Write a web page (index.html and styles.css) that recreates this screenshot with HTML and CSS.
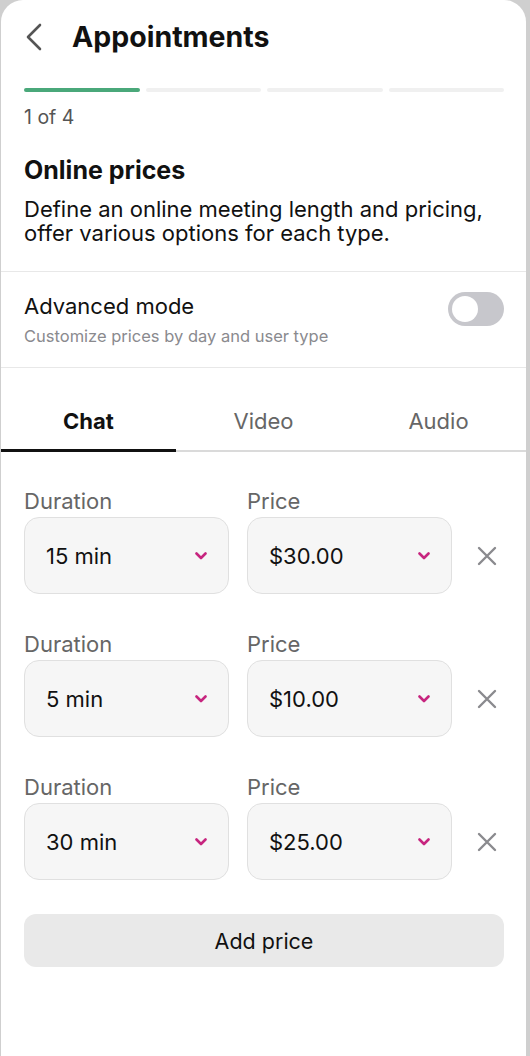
FILE: index.html
```html
<!DOCTYPE html>
<html lang="en">
<head>
<meta charset="utf-8">
<title>Appointments</title>
<link rel="stylesheet" href="styles.css">
</head>
<body>
<div class="card">
  <header class="topbar">
    <svg class="back" width="20" height="28" viewBox="0 0 20 28"><path d="M16 2 L4 14 L16 26" fill="none" stroke="#555" stroke-width="2.6" stroke-linecap="round" stroke-linejoin="round"/></svg>
    <h1 class="title">Appointments</h1>
  </header>

  <div class="progress">
    <span class="seg active"></span>
    <span class="seg"></span>
    <span class="seg"></span>
    <span class="seg"></span>
  </div>
  <div class="step">1 of 4</div>

  <section class="intro">
    <h2 class="intro-title">Online prices</h2>
    <p class="intro-text">Define an online meeting length and pricing, offer various options for each type.</p>
  </section>

  <section class="advanced">
    <div class="adv-text">
      <div class="adv-title">Advanced mode</div>
      <div class="adv-sub">Customize prices by day and user type</div>
    </div>
    <div class="toggle"><span class="knob"></span></div>
  </section>

  <nav class="tabs">
    <div class="tab active">Chat</div>
    <div class="tab">Video</div>
    <div class="tab">Audio</div>
  </nav>

  <div class="rows">
    <div class="row">
      <div class="field">
        <div class="label">Duration</div>
        <div class="select"><span>15 min</span><svg class="chev" width="12" height="8" viewBox="0 0 12 8"><path d="M1.5 1.5 L6 6 L10.5 1.5" fill="none" stroke="#c7257f" stroke-width="2.6" stroke-linecap="round" stroke-linejoin="round"/></svg></div>
      </div>
      <div class="field">
        <div class="label">Price</div>
        <div class="select"><span>$30.00</span><svg class="chev" width="12" height="8" viewBox="0 0 12 8"><path d="M1.5 1.5 L6 6 L10.5 1.5" fill="none" stroke="#c7257f" stroke-width="2.6" stroke-linecap="round" stroke-linejoin="round"/></svg></div>
      </div>
      <div class="remove"><svg width="20" height="20" viewBox="0 0 20 20"><path d="M2 2 L18 18 M18 2 L2 18" fill="none" stroke="#8a8a8e" stroke-width="2.4" stroke-linecap="round"/></svg></div>
    </div>

    <div class="row">
      <div class="field">
        <div class="label">Duration</div>
        <div class="select"><span>5 min</span><svg class="chev" width="12" height="8" viewBox="0 0 12 8"><path d="M1.5 1.5 L6 6 L10.5 1.5" fill="none" stroke="#c7257f" stroke-width="2.6" stroke-linecap="round" stroke-linejoin="round"/></svg></div>
      </div>
      <div class="field">
        <div class="label">Price</div>
        <div class="select"><span>$10.00</span><svg class="chev" width="12" height="8" viewBox="0 0 12 8"><path d="M1.5 1.5 L6 6 L10.5 1.5" fill="none" stroke="#c7257f" stroke-width="2.6" stroke-linecap="round" stroke-linejoin="round"/></svg></div>
      </div>
      <div class="remove"><svg width="20" height="20" viewBox="0 0 20 20"><path d="M2 2 L18 18 M18 2 L2 18" fill="none" stroke="#8a8a8e" stroke-width="2.4" stroke-linecap="round"/></svg></div>
    </div>

    <div class="row">
      <div class="field">
        <div class="label">Duration</div>
        <div class="select"><span>30 min</span><svg class="chev" width="12" height="8" viewBox="0 0 12 8"><path d="M1.5 1.5 L6 6 L10.5 1.5" fill="none" stroke="#c7257f" stroke-width="2.6" stroke-linecap="round" stroke-linejoin="round"/></svg></div>
      </div>
      <div class="field">
        <div class="label">Price</div>
        <div class="select"><span>$25.00</span><svg class="chev" width="12" height="8" viewBox="0 0 12 8"><path d="M1.5 1.5 L6 6 L10.5 1.5" fill="none" stroke="#c7257f" stroke-width="2.6" stroke-linecap="round" stroke-linejoin="round"/></svg></div>
      </div>
      <div class="remove"><svg width="20" height="20" viewBox="0 0 20 20"><path d="M2 2 L18 18 M18 2 L2 18" fill="none" stroke="#8a8a8e" stroke-width="2.4" stroke-linecap="round"/></svg></div>
    </div>
  </div>

  <div class="add-wrap">
    <button class="add-btn">Add price</button>
  </div>
</div>
</body>
</html>
```

FILE: styles.css
```css
* { box-sizing: border-box; }
html, body {
  margin: 0;
  padding: 0;
  background: #cfcfcf;
}
body {
  font-family: Inter, "Noto Sans", "Liberation Sans", sans-serif;
  color: #111;
  width: 530px;
  height: 1056px;
  overflow: hidden;
}
.card {
  margin-left: 1px;
  width: 525px;
  min-height: 1056px;
  background: #fff;
  border-radius: 22px 22px 0 0;
}
.topbar {
  display: flex;
  align-items: center;
  height: 36px;
  padding: 19px 0 0 23px;
  box-sizing: content-box;
}
.back { flex: none; }
.title {
  margin: 0 0 0 28px;
  font-size: 28.5px;
  line-height: 36px;
  font-weight: 700;
}
.progress {
  display: flex;
  gap: 6px;
  padding: 0 22px 0 23px;
  margin-top: 33px;
}
.seg {
  flex: 1;
  height: 4px;
  border-radius: 2px;
  background: #f0f0f0;
}
.seg.active { background: #4aa87a; }
.step {
  padding: 0 23px;
  margin-top: 14px;
  font-size: 19.5px;
  color: #555;
  line-height: 22px;
}
.intro {
  padding: 0 23px 26px;
  margin-top: 27px;
  border-bottom: 1px solid #e8e8e8;
}
.intro-title {
  margin: 0;
  font-size: 25px;
  font-weight: 700;
  line-height: 30px;
}
.intro-text {
  margin: 12px 0 0;
  font-size: 22px;
  line-height: 24px;
}
.advanced {
  display: flex;
  align-items: flex-start;
  justify-content: space-between;
  padding: 21px 22px 21px 23px;
  border-bottom: 1px solid #e8e8e8;
}
.adv-title {
  font-size: 22px;
  line-height: 26px;
}
.adv-sub {
  margin-top: 7px;
  font-size: 16.5px;
  line-height: 20px;
  color: #8a8a8e;
}
.toggle {
  width: 56px;
  height: 34px;
  border-radius: 17px;
  background: #c7c7cc;
  padding: 4px;
  margin-top: -1px;
}
.knob {
  display: block;
  width: 26px;
  height: 26px;
  border-radius: 50%;
  background: #fff;
}
.tabs {
  display: flex;
  margin-top: 40px;
  border-bottom: 2px solid #dadada;
}
.tab {
  flex: 1;
  text-align: center;
  font-size: 22px;
  line-height: 26px;
  padding-bottom: 16px;
  color: #666;
  margin-bottom: -2px;
}
.tab.active {
  color: #111;
  font-weight: 700;
  border-bottom: 3px solid #111;
  padding-bottom: 15px;
}
.rows {
  padding: 36px 23px 0 23px;
  display: flex;
  flex-direction: column;
  gap: 37px;
}
.row {
  display: grid;
  grid-template-columns: 1fr 1fr 33px;
  column-gap: 18px;
  align-items: end;
}
.label {
  font-size: 22px;
  line-height: 26px;
  color: #666;
  margin-bottom: 3px;
}
.select {
  height: 77px;
  border: 1px solid #e0e0e0;
  border-radius: 15px;
  background: #f6f6f6;
  display: flex;
  align-items: center;
  justify-content: space-between;
  padding: 0 21px 0 21px;
  font-size: 22px;
  color: #111;
}
.chev { flex: none; }
.remove {
  height: 77px;
  display: flex;
  align-items: center;
  justify-content: center;
}
.add-wrap {
  padding: 34px 22px 0 23px;
}
.add-btn {
  display: block;
  width: 100%;
  height: 53px;
  border: none;
  border-radius: 12px;
  background: #e9e9e9;
  font-family: inherit;
  font-size: 21.5px;
  color: #111;
}
```
